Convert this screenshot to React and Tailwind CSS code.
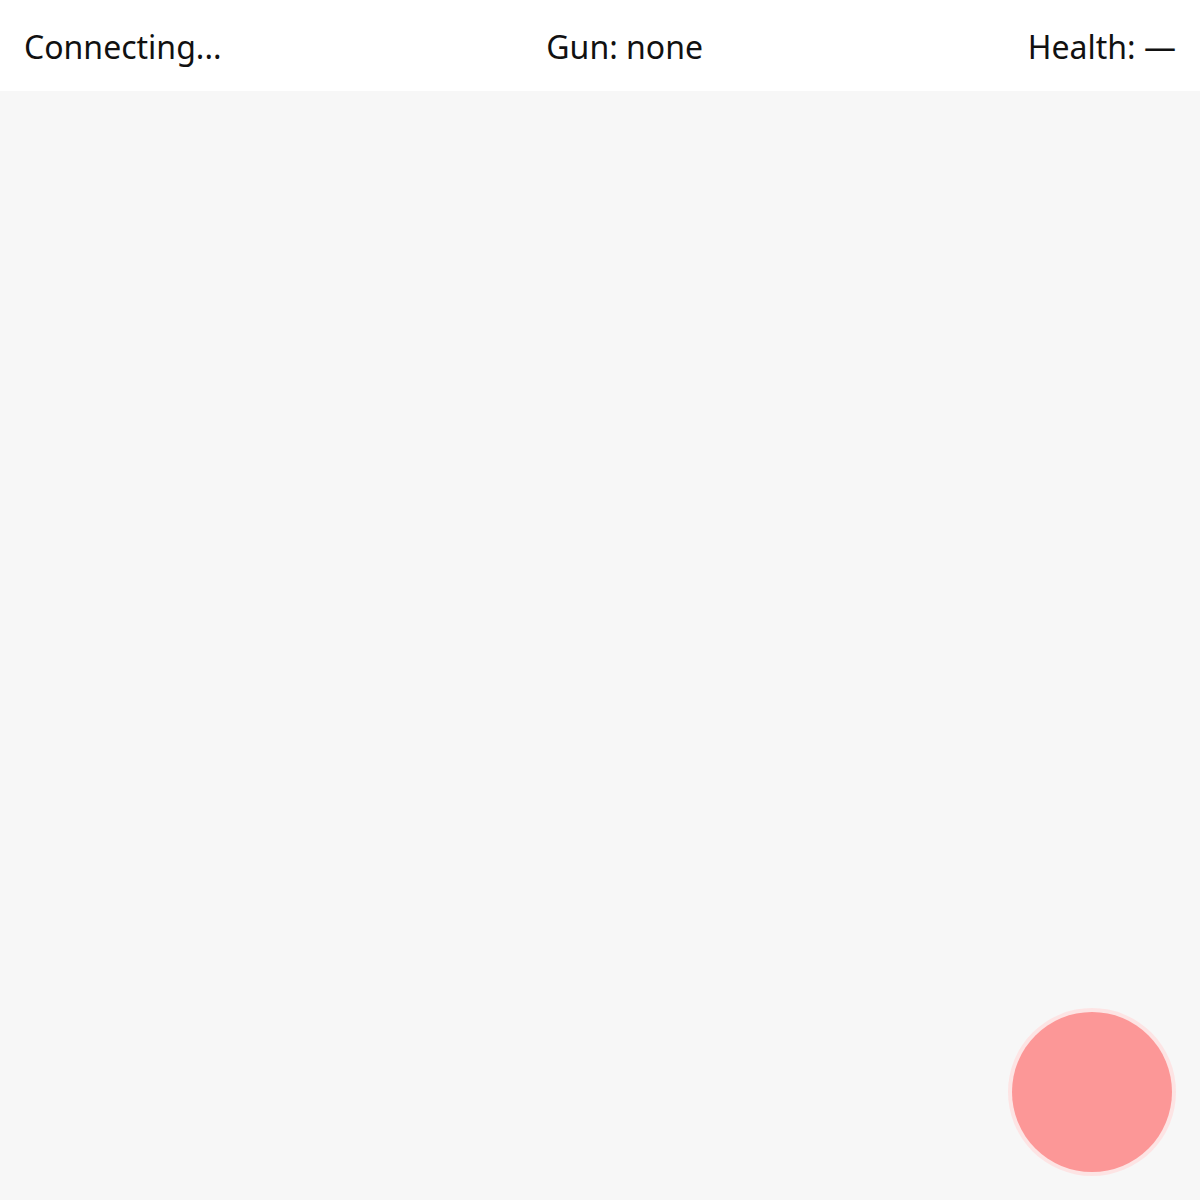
export default function App() {
  return (
    <div className="w-[1200px] h-[1200px] bg-[#f7f7f7] flex flex-col relative overflow-hidden" style={{ fontFamily: '"Noto Sans", sans-serif' }}>
      <div className="h-[91px] bg-white flex items-center justify-between px-6 pt-[2px] text-[32px] leading-none text-[#111]">
        <span>Connecting...</span>
        <span>Gun: none</span>
        <span>Health: —</span>
      </div>
      <div className="flex-1" />
      <div className="absolute right-[28px] bottom-[28px] w-[160px] h-[160px] rounded-full bg-[#fc9797] shadow-[0_0_0_4px_#fde4e4]" />
    </div>
  );
}
